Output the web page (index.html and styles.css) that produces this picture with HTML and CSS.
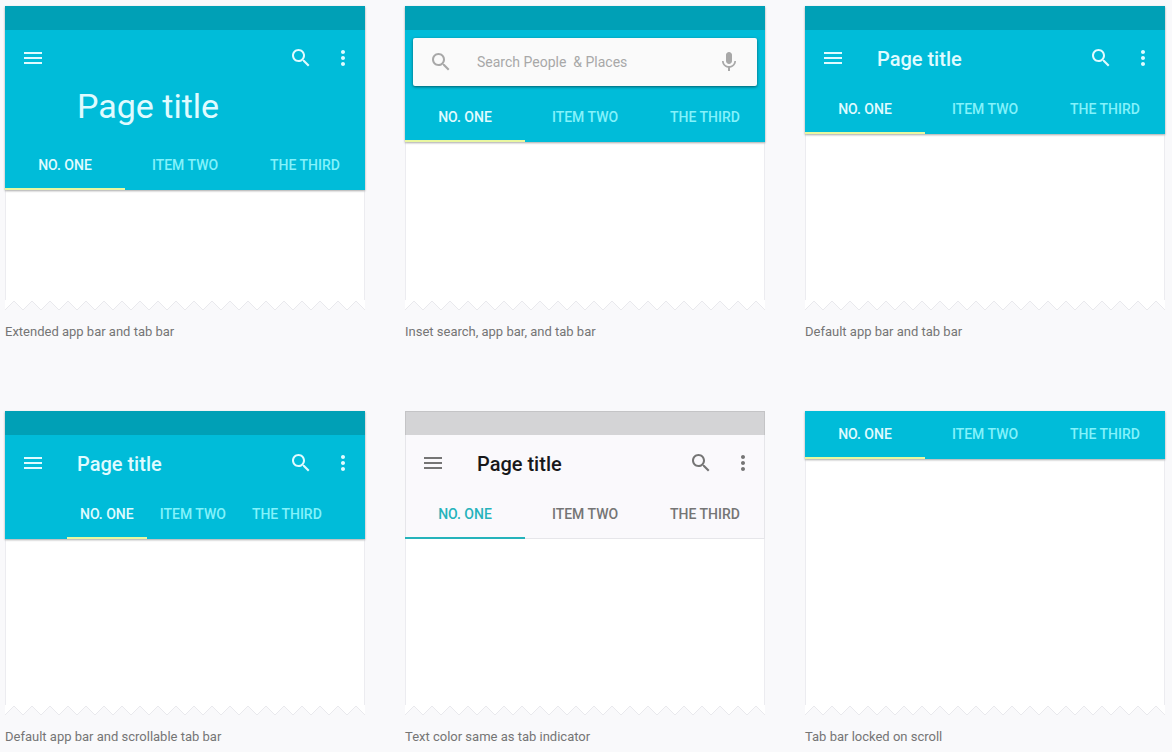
FILE: index.html
```html
<!DOCTYPE html>
<html lang="en">
<head>
<meta charset="UTF-8" />
<meta name="viewport" content="width=device-width, initial-scale=1" />
<title>App bars and tab bars</title>
<link rel="stylesheet" href="styles.css">
</head>
<body>

<!-- shared icons -->
<svg class="defs" aria-hidden="true">
  <symbol id="menu" viewBox="0 0 24 24"><path d="M3 18h18v-2H3v2zm0-5h18v-2H3v2zm0-7v2h18V6H3z"/></symbol>
  <symbol id="search" viewBox="0 0 24 24"><path d="M15.5 14h-.79l-.28-.27C15.41 12.59 16 11.11 16 9.5 16 5.91 13.09 3 9.5 3S3 5.91 3 9.5 5.91 16 9.5 16c1.61 0 3.09-.59 4.23-1.57l.27.28v.79l5 4.99L20.49 19l-4.99-5zm-6 0C7.01 14 5 11.99 5 9.5S7.01 5 9.5 5 14 7.01 14 9.5 11.99 14 9.5 14z"/></symbol>
  <symbol id="more" viewBox="0 0 24 24"><path d="M12 8c1.1 0 2-.9 2-2s-.9-2-2-2-2 .9-2 2 .9 2 2 2zm0 2c-1.1 0-2 .9-2 2s.9 2 2 2 2-.9 2-2-.9-2-2-2zm0 6c-1.1 0-2 .9-2 2s.9 2 2 2 2-.9 2-2-.9-2-2-2z"/></symbol>
  <symbol id="mic" viewBox="0 0 24 24"><path d="M12 14c1.66 0 2.99-1.34 2.99-3L15 5c0-1.66-1.34-3-3-3S9 3.34 9 5v6c0 1.66 1.34 3 3 3zm5.3-3c0 3-2.54 5.1-5.3 5.1S6.7 14 6.7 11H5c0 3.41 2.72 6.23 6 6.72V21h2v-3.28c3.28-.48 6-3.3 6-6.72h-1.7z"/></symbol>
  <pattern id="teeth" width="18" height="12" patternUnits="userSpaceOnUse">
    <path class="tooth-fill" d="M0 0H18V10L9 1L0 10Z"/>
    <path class="tooth-line" d="M0 10L9 1L18 10"/>
  </pattern>
</svg>

<main class="gallery">

  <figure class="example">
    <div class="screen">
      <header class="header">
        <div class="status-bar"></div>
        <div class="app-bar">
          <button class="icon-btn" aria-label="Menu"><svg><use href="#menu"/></svg></button>
          <span class="spacer"></span>
          <button class="icon-btn" aria-label="Search"><svg><use href="#search"/></svg></button>
          <button class="icon-btn more" aria-label="More"><svg><use href="#more"/></svg></button>
        </div>
        <h2 class="title-large">Page title</h2>
        <nav class="tabs">
          <button class="tab active">NO. ONE</button>
          <button class="tab">ITEM TWO</button>
          <button class="tab">THE THIRD</button>
        </nav>
      </header>
      <div class="content"></div>
      <svg class="torn"><rect width="100%" height="12" fill="url(#teeth)"/></svg>
    </div>
    <figcaption>Extended app bar and tab bar</figcaption>
  </figure>

  <figure class="example">
    <div class="screen">
      <header class="header">
        <div class="status-bar"></div>
        <div class="search-box">
          <svg><use href="#search"/></svg>
          <input type="text" aria-label="Search" placeholder="Search People &nbsp;&amp; Places">
          <button class="mic-btn" aria-label="Voice search"><svg><use href="#mic"/></svg></button>
        </div>
        <nav class="tabs">
          <button class="tab active">NO. ONE</button>
          <button class="tab">ITEM TWO</button>
          <button class="tab">THE THIRD</button>
        </nav>
      </header>
      <div class="content"></div>
      <svg class="torn"><rect width="100%" height="12" fill="url(#teeth)"/></svg>
    </div>
    <figcaption>Inset search, app bar, and tab bar</figcaption>
  </figure>

  <figure class="example">
    <div class="screen">
      <header class="header">
        <div class="status-bar"></div>
        <div class="app-bar">
          <button class="icon-btn" aria-label="Menu"><svg><use href="#menu"/></svg></button>
          <h2 class="title">Page title</h2>
          <button class="icon-btn" aria-label="Search"><svg><use href="#search"/></svg></button>
          <button class="icon-btn more" aria-label="More"><svg><use href="#more"/></svg></button>
        </div>
        <nav class="tabs">
          <button class="tab active">NO. ONE</button>
          <button class="tab">ITEM TWO</button>
          <button class="tab">THE THIRD</button>
        </nav>
      </header>
      <div class="content"></div>
      <svg class="torn"><rect width="100%" height="12" fill="url(#teeth)"/></svg>
    </div>
    <figcaption>Default app bar and tab bar</figcaption>
  </figure>

  <figure class="example">
    <div class="screen">
      <header class="header">
        <div class="status-bar"></div>
        <div class="app-bar">
          <button class="icon-btn" aria-label="Menu"><svg><use href="#menu"/></svg></button>
          <h2 class="title">Page title</h2>
          <button class="icon-btn" aria-label="Search"><svg><use href="#search"/></svg></button>
          <button class="icon-btn more" aria-label="More"><svg><use href="#more"/></svg></button>
        </div>
        <nav class="tabs scrollable">
          <button class="tab active">NO. ONE</button>
          <button class="tab">ITEM TWO</button>
          <button class="tab">THE THIRD</button>
        </nav>
      </header>
      <div class="content"></div>
      <svg class="torn"><rect width="100%" height="12" fill="url(#teeth)"/></svg>
    </div>
    <figcaption>Default app bar and scrollable tab bar</figcaption>
  </figure>

  <figure class="example">
    <div class="screen">
      <header class="header light">
        <div class="status-bar"></div>
        <div class="app-bar">
          <button class="icon-btn" aria-label="Menu"><svg><use href="#menu"/></svg></button>
          <h2 class="title">Page title</h2>
          <button class="icon-btn" aria-label="Search"><svg><use href="#search"/></svg></button>
          <button class="icon-btn more" aria-label="More"><svg><use href="#more"/></svg></button>
        </div>
        <nav class="tabs">
          <button class="tab active">NO. ONE</button>
          <button class="tab">ITEM TWO</button>
          <button class="tab">THE THIRD</button>
        </nav>
      </header>
      <div class="content"></div>
      <svg class="torn"><rect width="100%" height="12" fill="url(#teeth)"/></svg>
    </div>
    <figcaption>Text color same as tab indicator</figcaption>
  </figure>

  <figure class="example">
    <div class="screen">
      <header class="header">
        <nav class="tabs">
          <button class="tab active">NO. ONE</button>
          <button class="tab">ITEM TWO</button>
          <button class="tab">THE THIRD</button>
        </nav>
      </header>
      <div class="content"></div>
      <svg class="torn"><rect width="100%" height="12" fill="url(#teeth)"/></svg>
    </div>
    <figcaption>Tab bar locked on scroll</figcaption>
  </figure>

</main>

</body>
</html>
```

FILE: styles.css
```css
* {
  box-sizing: border-box;
}

body {
  margin: 0;
  background: #f9f9fb;
  font-family: Roboto, "Liberation Sans", sans-serif;
  color: #757575;
}

button, input {
  font: inherit;
  color: inherit;
  border: none;
  background: none;
  padding: 0;
}

button {
  cursor: pointer;
}

h2, figure {
  margin: 0;
}

svg {
  display: block;
  width: 24px;
  height: 24px;
  fill: currentColor;
}

.defs {
  position: absolute;
  width: 0;
  height: 0;
}

.gallery {
  display: grid;
  grid-template-columns: repeat(3, 1fr);
  gap: 69px 40px;
  padding: 6px 7px 4px 5px;
}

.screen {
  display: flex;
  flex-direction: column;
  min-height: 306px;
}

/* relative so the shadow falls over the content below */
.header {
  position: relative;
  background: #00bcd9;
  color: #e0fbff;
  box-shadow: 0 1px 2px rgba(0, 0, 0, 0.35);
}

.status-bar {
  height: 24px;
  background: #00a0b6;
}

.app-bar {
  display: flex;
  align-items: center;
  height: 56px;
  padding: 0 10px 0 16px;
}

.icon-btn.more {
  margin-left: 18px;
}

.spacer {
  flex: 1;
}

.title {
  flex: 1;
  padding: 2px 0 0 32px;
  font-size: 20px;
  font-weight: 500;
  line-height: 24px;
}

.title-large {
  height: 56px;
  padding-left: 72px;
  font-size: 34px;
  font-weight: 400;
  line-height: 40px;
}

.search-box {
  display: flex;
  align-items: center;
  height: 48px;
  margin: 8px;
  padding: 0 16px;
  border-radius: 2px;
  background: #fafafa;
  color: #a8a8a8;
  box-shadow: 0 1px 3px rgba(0, 0, 0, 0.5);
}

.search-box input {
  flex: 1;
  min-width: 0;
  padding-left: 24px;
  font-size: 14px;
  line-height: 20px;
}

.search-box input::placeholder {
  color: #a8a8a8;
}

.tabs {
  display: grid;
  grid-template-columns: repeat(3, 1fr);
  height: 48px;
}

.tab {
  padding: 0;
  border-bottom: 2px solid transparent;
  color: #84f2fb;
  font-size: 14px;
  font-weight: 500;
  line-height: 20px;
}

.tab.active {
  color: #e0fbff;
  border-bottom-color: #e9f7a0;
}

.tabs.scrollable {
  display: flex;
  padding-left: 62px;
}

.scrollable .tab {
  padding: 0 13px;
}

.content {
  flex: 1;
  border: 1px solid #ececf0;
  border-width: 0 1px;
  background: #fff;
}

.torn {
  width: 100%;
  height: 12px;
}

.tooth-fill {
  fill: #fff;
}

.tooth-line {
  fill: none;
  stroke: #e9e9ed;
}

/* Light theme */
.light {
  background: #faf9fc;
  color: #757575;
  box-shadow: inset 0 0 0 1px #e6e6ea;
}

.light .status-bar {
  border: 1px solid #c4c4c6;
  border-bottom: none;
  background: #d4d4d6;
}

.light .title {
  color: #18181a;
}

.light .tab {
  color: #757575;
}

.light .tab.active {
  color: #25b3bb;
  border-bottom-color: #25b3bb;
}

figcaption {
  padding-top: 10px;
  font-size: 13px;
  line-height: 20px;
}
```
